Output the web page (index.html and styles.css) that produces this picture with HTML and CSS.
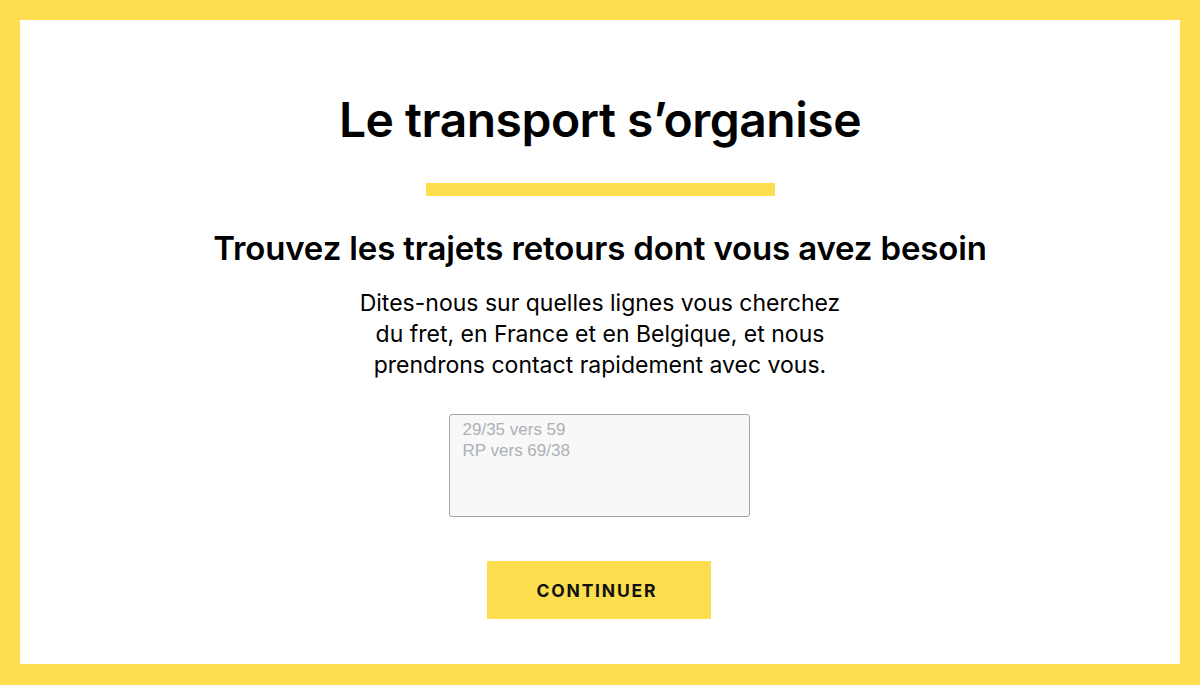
FILE: index.html
```html
<!DOCTYPE html>
<html lang="fr">
<head>
<meta charset="utf-8">
<title>Le transport s’organise</title>
<link rel="stylesheet" href="styles.css">
</head>
<body>
<main class="frame">
  <section class="content">
    <h1 class="title">Le transport s’organise</h1>
    <div class="rule"></div>
    <h2 class="subtitle">Trouvez les trajets retours dont vous avez besoin</h2>
    <p class="lead">Dites-nous sur quelles lignes vous cherchez<br>du fret, en France et en Belgique, et nous<br>prendrons contact rapidement avec vous.</p>
    <textarea class="routes" placeholder="29/35 vers 59&#10;RP vers 69/38"></textarea>
    <button class="cta" type="button">CONTINUER</button>
  </section>
</main>
</body>
</html>
```
FILE: styles.css
```css
html, body {
  margin: 0;
  padding: 0;
  height: 100%;
}
body {
  background: #fcde4f;
  font-family: Inter, "Liberation Sans", sans-serif;
  color: #000;
}
.frame {
  box-sizing: border-box;
  height: 685px;
  padding: 20px 20px 21px 20px;
}
.content {
  background: #fff;
  height: 100%;
  display: flex;
  flex-direction: column;
  align-items: center;
}
.title {
  margin: 72px 0 0 0;
  font-size: 48px;
  font-weight: 600;
  line-height: 56px;
  letter-spacing: -0.5px;
}
.rule {
  width: 349px;
  height: 13px;
  background: #fcde4f;
  margin-top: 35px;
}
.subtitle {
  margin: 32px 0 0 0;
  font-size: 33px;
  font-weight: 600;
  line-height: 40px;
  letter-spacing: -0.15px;
}
.lead {
  margin: 20px 0 0 0;
  font-size: 23px;
  line-height: 31px;
  text-align: center;
  font-weight: 400;
}
.routes {
  box-sizing: border-box;
  width: 301px;
  height: 103px;
  margin: 33px 2px 0 0;
  border: 1px solid #a6a6a6;
  border-radius: 3px;
  background: #f8f8f9;
  padding: 4px 13px;
  font-family: "Liberation Sans", Arial, sans-serif;
  font-size: 17px;
  line-height: 21px;
  resize: none;
}
.routes::placeholder {
  color: #adb0b5;
}
.cta {
  margin: 44px 2px 0 0;
  width: 224px;
  height: 58px;
  border: 0;
  background: #fcde4f;
  font-family: Inter, "Liberation Sans", sans-serif;
  font-size: 17.5px;
  font-weight: 700;
  letter-spacing: 1.8px;
  padding-left: 1.8px;
  color: #111;
}
```
